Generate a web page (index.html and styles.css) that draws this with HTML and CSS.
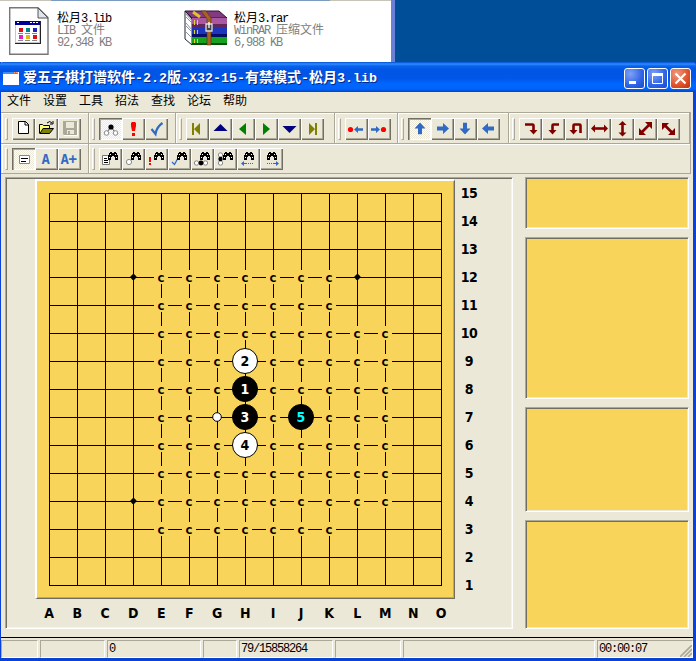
FILE: index.html
```html
<!DOCTYPE html>
<html lang="zh-CN">
<head>
<meta charset="utf-8">
<title>爱五子棋打谱软件</title>
<link rel="stylesheet" href="styles.css">
</head>
<body>
<svg class="defs" width="0" height="0">
  <defs>
    <symbol id="bino" viewBox="0 0 10 9"><path fill="#000" d="M2 0h2v1h2V0h2v1h1v2h1v5H7V5H6V4H4v1H3v3H0V3h1V1h1z"/><path fill="#fff" d="M2 2h1v1H2zM1 5h1v1H1zM7 2h1v1H7zM8 5h1v1H8z"/></symbol>
    <symbol id="arrow" viewBox="0 0 12 11"><path fill="#316ac5" d="M0 3.500h6V0l6 5.500L6 11V7.500H0z"/></symbol>
  </defs>
</svg>

<section class="explorer">
  <div class="file lib">
    <svg width="40" height="48" viewBox="0 0 40 48">
      <path d="M.7.7H29L39 10.500V47.300H.7z" fill="#fff" stroke="#777" stroke-width="1.400"/>
      <path d="M29 1v10h10z" fill="#dfe5ee" stroke="#555"/>
      <path d="M6 14h26v23H6z" fill="#222"/>
      <path d="M6 14h25v22H6z" fill="#c8c8c8"/><path d="M7 18h23v17H7z" fill="#fff"/><path d="M6 14h25v4H6z" fill="#009"/>
      <path d="M8 15h2v1H8zM21 15h2v1h-2zM24 15h2v1h-2zM27 15h2v1h-2z" fill="#fff"/>
      <path d="M10 21h4v4h-4zM24 28h4v4h-4z" fill="#d11"/><path d="M17 21h4v4h-4z" fill="#088"/><path d="M24 21h4v4h-4z" fill="#22b"/>
      <path d="M10 28h4v4h-4z" fill="#d2c"/><path d="M17 28h4v4h-4z" fill="#db1"/>
      <path d="M9 26.500h5M16 26.500h5M23 26.500h5M9 33.500h5M16 33.500h5M23 33.500h5" stroke="#888"/>
    </svg>
    <div class="info"><b>松月<i>3.lib</i></b><span><i>LIB </i>文件</span><span><i>92,348 KB</i></span></div>
  </div>
  <div class="file rar">
    <svg width="44" height="36" viewBox="0 0 44 36">
      <path d="M1 1l7 8v26l-7-6z" fill="#fff" stroke="#223"/>
      <path d="M2 4l6 7M2 13l6 7M2 22l6 6M2 7l6 6M2 16l6 6" stroke="#8a90a0"/>
      <path d="M1 1h34l8 7H8z" fill="#843a80" stroke="#301030"/>
      <path d="M8 8h35v9H8z" fill="#a9579f"/><path d="M8 14h35v4H8z" fill="#612560"/>
      <path d="M8 18h35v8H8z" fill="#1d35bc"/><path d="M8 24h35v3H8z" fill="#070e65"/>
      <path d="M8 27h35v8H8z" fill="#15a21c"/><path d="M8 33h35v2H8z" fill="#064c08"/>
      <path d="M9 2l7 5" stroke="#e2c32c" stroke-width="3"/>
      <path d="M10.500 10v5M13.500 10v5M10.500 20v4M13.500 20v4M10.500 29v4M13.500 29v4" stroke="#e2d436"/>
      <path d="M17 1h5l5 7v27h-4V9z" fill="#a56324" stroke="#57300e" stroke-width=".6"/>
      <path d="M22 14h6v7h-6z" fill="#444" stroke="#ddd" stroke-width="1.300"/><path d="M25 12v6" stroke="#fff" stroke-width="1.300"/>
    </svg>
    <div class="info"><b>松月<i>3.rar</i></b><span><i>WinRAR </i>压缩文件</span><span><i>6,988 KB</i></span></div>
  </div>
</section>

<main class="window">
  <header class="titlebar">
    <svg class="appicon" width="16" height="13" viewBox="0 0 16 13"><path d="M0 0h16v13H0z" fill="#fff"/><path d="M0 0h15v2H0z" fill="#3c8df5"/><path d="M11 0h1v1h-1zM13 0h2v1h-2z" fill="#f96"/></svg>
    <h1>爱五子棋打谱软件<i>-2.2</i>版<i>-X32-15-</i>有禁模式<i>-</i>松月<i>3.lib</i></h1>
    <div class="controls">
      <span class="ctl"><svg viewBox="0 0 21 21"><path fill="#fff" d="M5 13h7v3H5z"/></svg></span>
      <span class="ctl"><svg viewBox="0 0 21 21"><path fill="none" stroke="#fff" d="M5.500 6v9.500h10V6"/><path fill="#fff" d="M5 5h11v3H5z"/></svg></span>
      <span class="ctl close"><svg viewBox="0 0 21 21"><path stroke="#fff" stroke-width="2.200" d="M5.500 5.500l10 10M15.500 5.500l-10 10"/></svg></span>
    </div>
  </header>
  <nav class="menu"><span>文件</span><span>设置</span><span>工具</span><span>招法</span><span>查找</span><span>论坛</span><span>帮助</span></nav>

  <div class="tools">
    <div class="row first">
      <div class="band b1">
        <button><svg viewBox="0 0 23 22"><path d="M6.500 3.500h7l3 3v9h-10z" fill="#fff" stroke="#000"/><path d="M13 3v4h4" fill="none" stroke="#000"/></svg></button>
        <button><svg viewBox="0 0 23 22"><path d="M4.500 15.500v-9h3l1 1h6v3" fill="#ffff70" stroke="#000"/><path d="M5 15.500l3-5h10.500l-4 5z" fill="#808000" stroke="#000"/><path d="M12 5q3-3 5 0M18 3v3h-3" fill="none" stroke="#000"/></svg></button>
        <button><svg viewBox="0 0 23 22"><path fill="#aca899" fill-rule="evenodd" d="M5 3h14v14H6l-1-1zM8 4h8v6H8zM9 12h7v4h-4v-3h-2v3H9z"/><path d="M6 17.500h13.500V4" fill="none" stroke="#fff"/></svg></button>
      </div>
      <div class="band b2">
        <button class="on"><svg viewBox="0 0 23 22"><path d="M12 9l-4 5M12 9l4 5" stroke="#555"/><circle cx="12" cy="9" r="2.600"/><g fill="#fff" stroke="#888"><circle cx="7.500" cy="15" r="2.300"/><circle cx="16.500" cy="15" r="2.300"/></g></svg></button>
        <button><svg viewBox="0 0 23 22"><path fill="red" d="M10 4h3l1 1v3l-1 5h-3L9 8V5zM10 15h3v3h-3z"/></svg></button>
        <button><svg viewBox="0 0 23 22"><path d="M6.500 11l4 5q1-7 7-11" fill="none" stroke="#316ac5" stroke-width="2.200"/></svg></button>
      </div>
      <div class="band b3">
        <button><svg viewBox="0 0 23 22"><path fill="#808000" d="M6 5h2v12H6zM14 5v12l-6-6z"/></svg></button>
        <button><svg viewBox="0 0 23 22"><path fill="#000080" d="M11.500 6l7 7h-14z"/></svg></button>
        <button><svg viewBox="0 0 23 22"><path fill="#008000" d="M14 5v12l-7-6z"/></svg></button>
        <button><svg viewBox="0 0 23 22"><path fill="#008000" d="M8 5v12l7-6z"/></svg></button>
        <button><svg viewBox="0 0 23 22"><path fill="#000080" d="M4.500 8h14l-7 7z"/></svg></button>
        <button><svg viewBox="0 0 23 22"><path fill="#808000" d="M14 5h2v12h-2zM8 5v12l6-6z"/></svg></button>
      </div>
      <div class="band b4">
        <button><svg viewBox="0 0 23 22"><circle cx="5.500" cy="11.500" r="2.600" fill="red"/><path fill="#316ac5" d="M9 11.500L13 8v2.200h5v2.600h-5V15z"/></svg></button>
        <button><svg viewBox="0 0 23 22"><circle cx="15.500" cy="11.500" r="2.600" fill="red"/><path fill="#316ac5" d="M12 11.500L8 8v2.200H3v2.600h5V15z"/></svg></button>
      </div>
      <div class="band b5">
        <button class="on"><svg viewBox="0 0 23 22"><use href="#arrow" x="6" y="5" width="12" height="11" transform="rotate(-90 12 10.500)"/></svg></button>
        <button><svg viewBox="0 0 23 22"><use href="#arrow" x="6" y="5" width="12" height="11"/></svg></button>
        <button><svg viewBox="0 0 23 22"><use href="#arrow" x="5" y="5" width="12" height="11" transform="rotate(90 11 10.500)"/></svg></button>
        <button><svg viewBox="0 0 23 22"><use href="#arrow" x="5" y="5" width="12" height="11" transform="rotate(180 11 10.500)"/></svg></button>
      </div>
      <div class="band b6">
        <button><svg viewBox="0 0 23 22"><g class="turn"><path class="ln" d="M6 6.500h7.500q1 0 1 1V13"/><path d="M10.500 12h8l-4 4.500z"/></g></svg></button>
        <button><svg viewBox="0 0 23 22"><g class="turn"><path class="ln" d="M17 6.500h-5.500q-1 0-1 1V13"/><path d="M6.500 12h8l-4 4.500z"/></g></svg></button>
        <button><svg viewBox="0 0 23 22"><g class="turn"><path class="ln" d="M15.500 15V7.500q0-1-1-1h-5q-1 0-1 1V13"/><path d="M4.500 12h8l-4 4.500z"/></g></svg></button>
        <button><svg viewBox="0 0 23 22"><g class="turn"><path class="ln" d="M6 10.500h11"/><path d="M3 10.500l4-4v8zM20 10.500l-4-4v8z"/></g></svg></button>
        <button><svg viewBox="0 0 23 22"><g class="turn"><path class="ln" d="M11.500 6v10"/><path d="M11.500 3l4 4h-8zM11.500 18.500l4-4h-8z"/></g></svg></button>
        <button><svg viewBox="0 0 23 22"><g class="turn"><path class="ln" d="M7 15l9-9"/><path d="M5 17v-7l7 7zM18 4v7l-7-7z"/></g></svg></button>
        <button><svg viewBox="0 0 23 22"><g class="turn"><path class="ln" d="M7 6.500l9 9"/><path d="M5 5h7l-7 7zM18 17v-7l-7 7z"/></g></svg></button>
      </div>
    </div>
    <div class="row">
      <div class="band b1">
        <button class="on"><svg viewBox="0 0 23 22"><path d="M7.500 7.500h10v8h-10z" fill="#fff" stroke="#888"/><path d="M9 10.500h7M9 13.500h5" stroke="#000"/></svg></button>
        <button class="letter">A</button>
        <button class="letter">A+</button>
      </div>
      <div class="band b7">
        <button><svg viewBox="0 0 23 22"><path d="M3.500 7.500h5l2 2v7h-7z" fill="#fff" stroke="#777"/><path d="M5 10.500h3M5 12.500h4M5 14.500h4" stroke="#000"/><use href="#bino" x="9" y="4" width="10" height="9"/></svg></button>
        <button><svg viewBox="0 0 23 22"><circle cx="7" cy="14" r="2.600" fill="#fff" stroke="#888"/><use href="#bino" x="9" y="4" width="10" height="9"/></svg></button>
        <button><svg viewBox="0 0 23 22"><path fill="red" d="M4 9h2v5H4zM4 15h2v2H4z"/><use href="#bino" x="9" y="4" width="10" height="9"/></svg></button>
        <button><svg viewBox="0 0 23 22"><path d="M4 14l2.500 2.500L10 10" fill="none" stroke="#316ac5" stroke-width="1.300"/><use href="#bino" x="9" y="4" width="10" height="9"/></svg></button>
        <button><svg viewBox="0 0 23 22"><g fill="#fff" stroke="#888"><circle cx="5.500" cy="15" r="2.200"/><circle cx="14.500" cy="15" r="2.200"/></g><circle cx="10" cy="15" r="2.400"/><use href="#bino" x="9" y="4" width="10" height="9"/></svg></button>
        <button><svg viewBox="0 0 23 22"><g fill="#fff" stroke="#888"><circle cx="6.500" cy="7" r="2.200"/><circle cx="6.500" cy="15" r="2.200"/></g><circle cx="6.500" cy="11" r="2.200"/><use href="#bino" x="9" y="4" width="10" height="9"/></svg></button>
        <button><svg viewBox="0 0 23 22"><path fill="#316ac5" d="M4 15.500l3-2.500v2h2v1H7v2z"/><path d="M9 15.500h8" stroke="#316ac5" stroke-dasharray="1 1"/><use href="#bino" x="7" y="4" width="10" height="9"/></svg></button>
        <button><svg viewBox="0 0 23 22"><path fill="#316ac5" d="M19 15.500L16 13v2h-2v1h2v2z"/><path d="M7 15.500h8" stroke="#316ac5" stroke-dasharray="1 1"/><use href="#bino" x="7" y="4" width="10" height="9"/></svg></button>
      </div>
    </div>
  </div>

  <div class="content">
    <section class="boardpanel">
      <div class="board"><svg id="grid" width="416" height="416" viewBox="37 181 416 416"></svg></div>
      <div class="ranks" id="ranks"></div>
      <div class="files" id="files"></div>
    </section>
    <aside class="side"><div class="pane"></div><div class="pane"></div><div class="pane"></div><div class="pane"></div></aside>
  </div>

  <footer class="status">
    <span></span><span></span><span>0</span><span></span><span>79/15858264</span><span></span><span></span><span>00:00:07
      <svg class="grip" width="12" height="12" viewBox="0 0 12 12"><path d="M0 12L12 0M4 12l8-8M8 12l4-4" stroke="#aca899" stroke-width="1.600"/></svg></span>
  </footer>
</main>
<script src="board.js"></script>
</body>
</html>
```
FILE: styles.css
```css
* { box-sizing: border-box; }
body {
  margin: 0; width: 696px; height: 661px; overflow: hidden; background: #004e98;
  font: 12px/12px "Liberation Mono", "Noto Sans CJK SC", monospace; color: #000;
}
i { font-style: normal; }
.defs { position: absolute; }

.explorer {
  width: 395px; height: 62px; display: flex; border-right: 4px solid #6a7fd6;
  background: linear-gradient(90deg, #c8c4b8 51px, #7a9cc0 51px 330px, #c8c4b8 330px) 0 0 / 100% 1px no-repeat #fff;
}
.file { display: flex; }
.lib { width: 184px; padding: 7px 0 0 9px; }
.rar { padding: 10px 0 0 0; }
.info { display: flex; flex-direction: column; color: #808080; white-space: pre; }
.info b { color: #000; font-weight: normal; }
.info i { letter-spacing: -1.2px; }
.info > * { height: 12px; line-height: 12px; }
.lib .info { margin: 6px 0 0 8px; }
.rar .info { margin: 3px 0 0 6px; }

.window {
  height: 599px; background: #ebe8d7; border: solid #0842d8; border-width: 0 3px 3px 1px;
  display: flex; flex-direction: column;
}
.titlebar {
  height: 30px; flex: none; margin: 0 -3px 0 -1px; padding: 3px 5px 0 3px; display: flex; align-items: center; color: #fff;
  border-radius: 3px 4px 0 0;
  background: linear-gradient(#0050d0 0, #2f8dff 2px, #0a62ee 4px, #0055e5 8px, #0056e8 16px, #0066ff 22px, #0064fb 27px, #0044c8 30px);
}
.titlebar h1 {
  margin: 0 0 0 4px; font: bold 14px/20px "Liberation Mono", "Noto Sans CJK SC", monospace;
  text-shadow: 1px 1px #002a8a; white-space: nowrap;
}
.titlebar i { font-size: 13.33px; }
.controls { margin-left: auto; display: flex; gap: 2px; }
.ctl {
  width: 21px; height: 21px; border: 1px solid #fff; border-radius: 3px;
  background: radial-gradient(circle at 30% 25%, #7fa0f5, #2f63e6 60%, #1d49c8);
}
.ctl svg { display: block; width: 21px; height: 21px; margin: -1px; }
.close { background: radial-gradient(circle at 30% 25%, #f09a80, #e0502a 60%, #bb3210); }
.menu { height: 20px; flex: none; padding: 1px 6px 0; display: flex; gap: 12px; line-height: 19px; }

.tools { flex: none; height: 62px; margin-right: 2px; border-top: 1px solid #aca899; border-right: 1px solid #aca899; }
.row { display: flex; height: 30px; border-bottom: 1px solid #aca899; box-shadow: inset 0 1px #fff; padding-left: 1px; }
.row.first { height: 31px; }
.band { display: flex; padding: 4px 0 0 3px; border-right: 1px solid #aca899; box-shadow: inset 1px 0 #fff; }
.row.first .band { padding-top: 5px; }
.band::before {
  content: ""; box-sizing: border-box; width: 3px; height: 22px; margin-right: 4px; flex: none;
  border: 1px solid; border-color: #fff #aca899 #aca899 #fff;
}
.b1 { width: 87px; }
.b2 { width: 87px; }
.b3 { width: 159px; }
.b4 { width: 63px; }
.b5 { width: 111px; }
.b6 { flex: 1; }
.b7 { flex: 1; border-right: 0; }
button {
  width: 23px; height: 22px; padding: 0; border: 0; flex: none; display: block; background: #ebe8d7;
  box-shadow: inset 1px 1px #fff, inset -1px -1px #716f64, inset -2px -2px #aca899;
}
button svg { display: block; width: 23px; height: 22px; }
.on {
  background: repeating-conic-gradient(#fff 0 25%, #ebe8d7 0 50%) 0 0 / 2px 2px;
  box-shadow: inset 1px 1px #716f64, inset 2px 2px #aca899, inset -1px -1px #fff;
}
.letter { color: #316ac5; font: bold 14px/19px "DejaVu Sans Mono", monospace; letter-spacing: -.5px; text-align: center; padding-right: 2px; }
.turn { fill: #800000; }
.turn .ln { fill: none; stroke: #800000; stroke-width: 2.6; }

.content { display: flex; gap: 12px; padding: 3px 0 0 4px; height: 463px; flex: none; }
.boardpanel, .pane {
  border: 1px solid; border-color: #aca899 #fff #fff #aca899;
  box-shadow: inset 1px 1px #716f64, inset -1px -1px #f5f3ea;
}
.boardpanel {
  width: 508px; height: 452px; display: grid; padding: 1px 0 0 29px;
  grid-template: 420px 28px / 420px 1fr;
}
.board { border: 2px solid; border-color: #fff #716f64 #716f64 #fff; background: #f9d45b; box-shadow: inset -1px -1px #aca899; }
.board { border-width: 2px 1px 1px 2px; padding: 0 1px 1px 0; }
.board svg { display: block; margin-right: -1px; }
.ranks, .files { font: bold 14px/28px "DejaVu Sans Condensed", "DejaVu Sans", sans-serif; text-align: center; letter-spacing: -.4px; }
.ranks { width: 28px; }
.ranks span { display: block; height: 28px; }
.files { display: flex; }
.files span { width: 28px; }
.side { width: 164px; display: grid; grid-template-rows: 52px 162px 105px 109px; gap: 8px; height: 452px; }
.pane { background: #f9d45b; box-shadow: inset 1px 1px #716f64, inset -1px -1px #ebe8d7; }

.status {
  flex: none; height: 21px; border-top: 1px solid #000; padding-top: 2px; display: grid; gap: 2px;
  grid-template-columns: 37px 65px 94px 34px 94px 66px 192px 1fr;
}
.status span { border: 1px solid; border-color: #aca899 #fff #fff #aca899; padding-left: 1px; line-height: 17px; letter-spacing: -1.2px; display: flex; justify-content: space-between; height: 18px; white-space: nowrap; overflow: hidden; }
.grip { align-self: flex-end; flex: none; }
svg text { text-anchor: middle; }
.mark { font: bold 13px "DejaVu Sans Mono", monospace; }
.num { font: bold 14px "DejaVu Sans Condensed", sans-serif; }
```
FILE: board.js
```js
const NS = 'http://www.w3.org/2000/svg';
const grid = document.getElementById('grid');
const letters = 'ABCDEFGHIJKLMNO';
const X = c => 49.5 + 28 * letters.indexOf(c);
const Y = r => 585.5 - 28 * (r - 1);

function add(tag, attrs, text) {
  const el = document.createElementNS(NS, tag);
  for (const k in attrs) el.setAttribute(k, attrs[k]);
  if (text) el.textContent = text;
  grid.appendChild(el);
}

for (let i = 0; i < 15; i++) {
  const p = 28 * i;
  add('path', { d: `M49 ${193.5 + p}H442M${49.5 + p} 193V586`, stroke: '#000' });
}
for (const [c, r] of [['D', 12], ['L', 12], ['D', 4]]) {
  add('path', { d: `M${X(c) - 3.5} ${Y(r) - .5}l2-2 1-1 1 0 2.500 2.500 0 1-2.500 2.500-1.500 0z` });
}

const marks = {
  12: 'EFGHIJK', 11: 'EFGHIJK', 10: 'EFGHIJKLM', 9: 'EFGIJKLM', 8: 'EFGIJKLM',
  7: 'EFIJKLM', 6: 'EFGIJKLM', 5: 'EFGHIJKLM', 4: 'EFGHIJKLM', 3: 'EFGHIJK'
};
for (const r in marks) for (const c of marks[r]) {
  if (r === '7' && c === 'J') continue;
  add('rect', { x: X(c) - 7.5, y: Y(r) - 7.5, width: 14, height: 14, fill: '#f9d45b' });
  add('text', { x: X(c) - .5, y: Y(r) + 4.5, class: 'mark' }, 'c');
}

const stones = [['H', 8, '#000', '#fff'], ['H', 9, '#fff', '#000'], ['H', 7, '#000', '#fff'], ['H', 6, '#fff', '#000'], ['J', 7, '#000', '#00ffff']];
stones.forEach(([c, r, fill, ink], i) => {
  add('circle', { cx: X(c) - .5, cy: Y(r) - .5, r: 12.5, fill, stroke: '#000' });
  add('text', { x: X(c) - .5, y: Y(r) + 4.5, fill: ink, class: 'num' }, String(i + 1));
});
add('circle', { cx: X('G') - .5, cy: Y(7) - .5, r: 4.3, fill: '#fff', stroke: '#000' });

const fill = (id, items) => {
  for (const t of items) {
    const s = document.createElement('span');
    s.textContent = t;
    document.getElementById(id).appendChild(s);
  }
};
fill('ranks', Array.from({ length: 15 }, (_, i) => 15 - i));
fill('files', letters);
```
